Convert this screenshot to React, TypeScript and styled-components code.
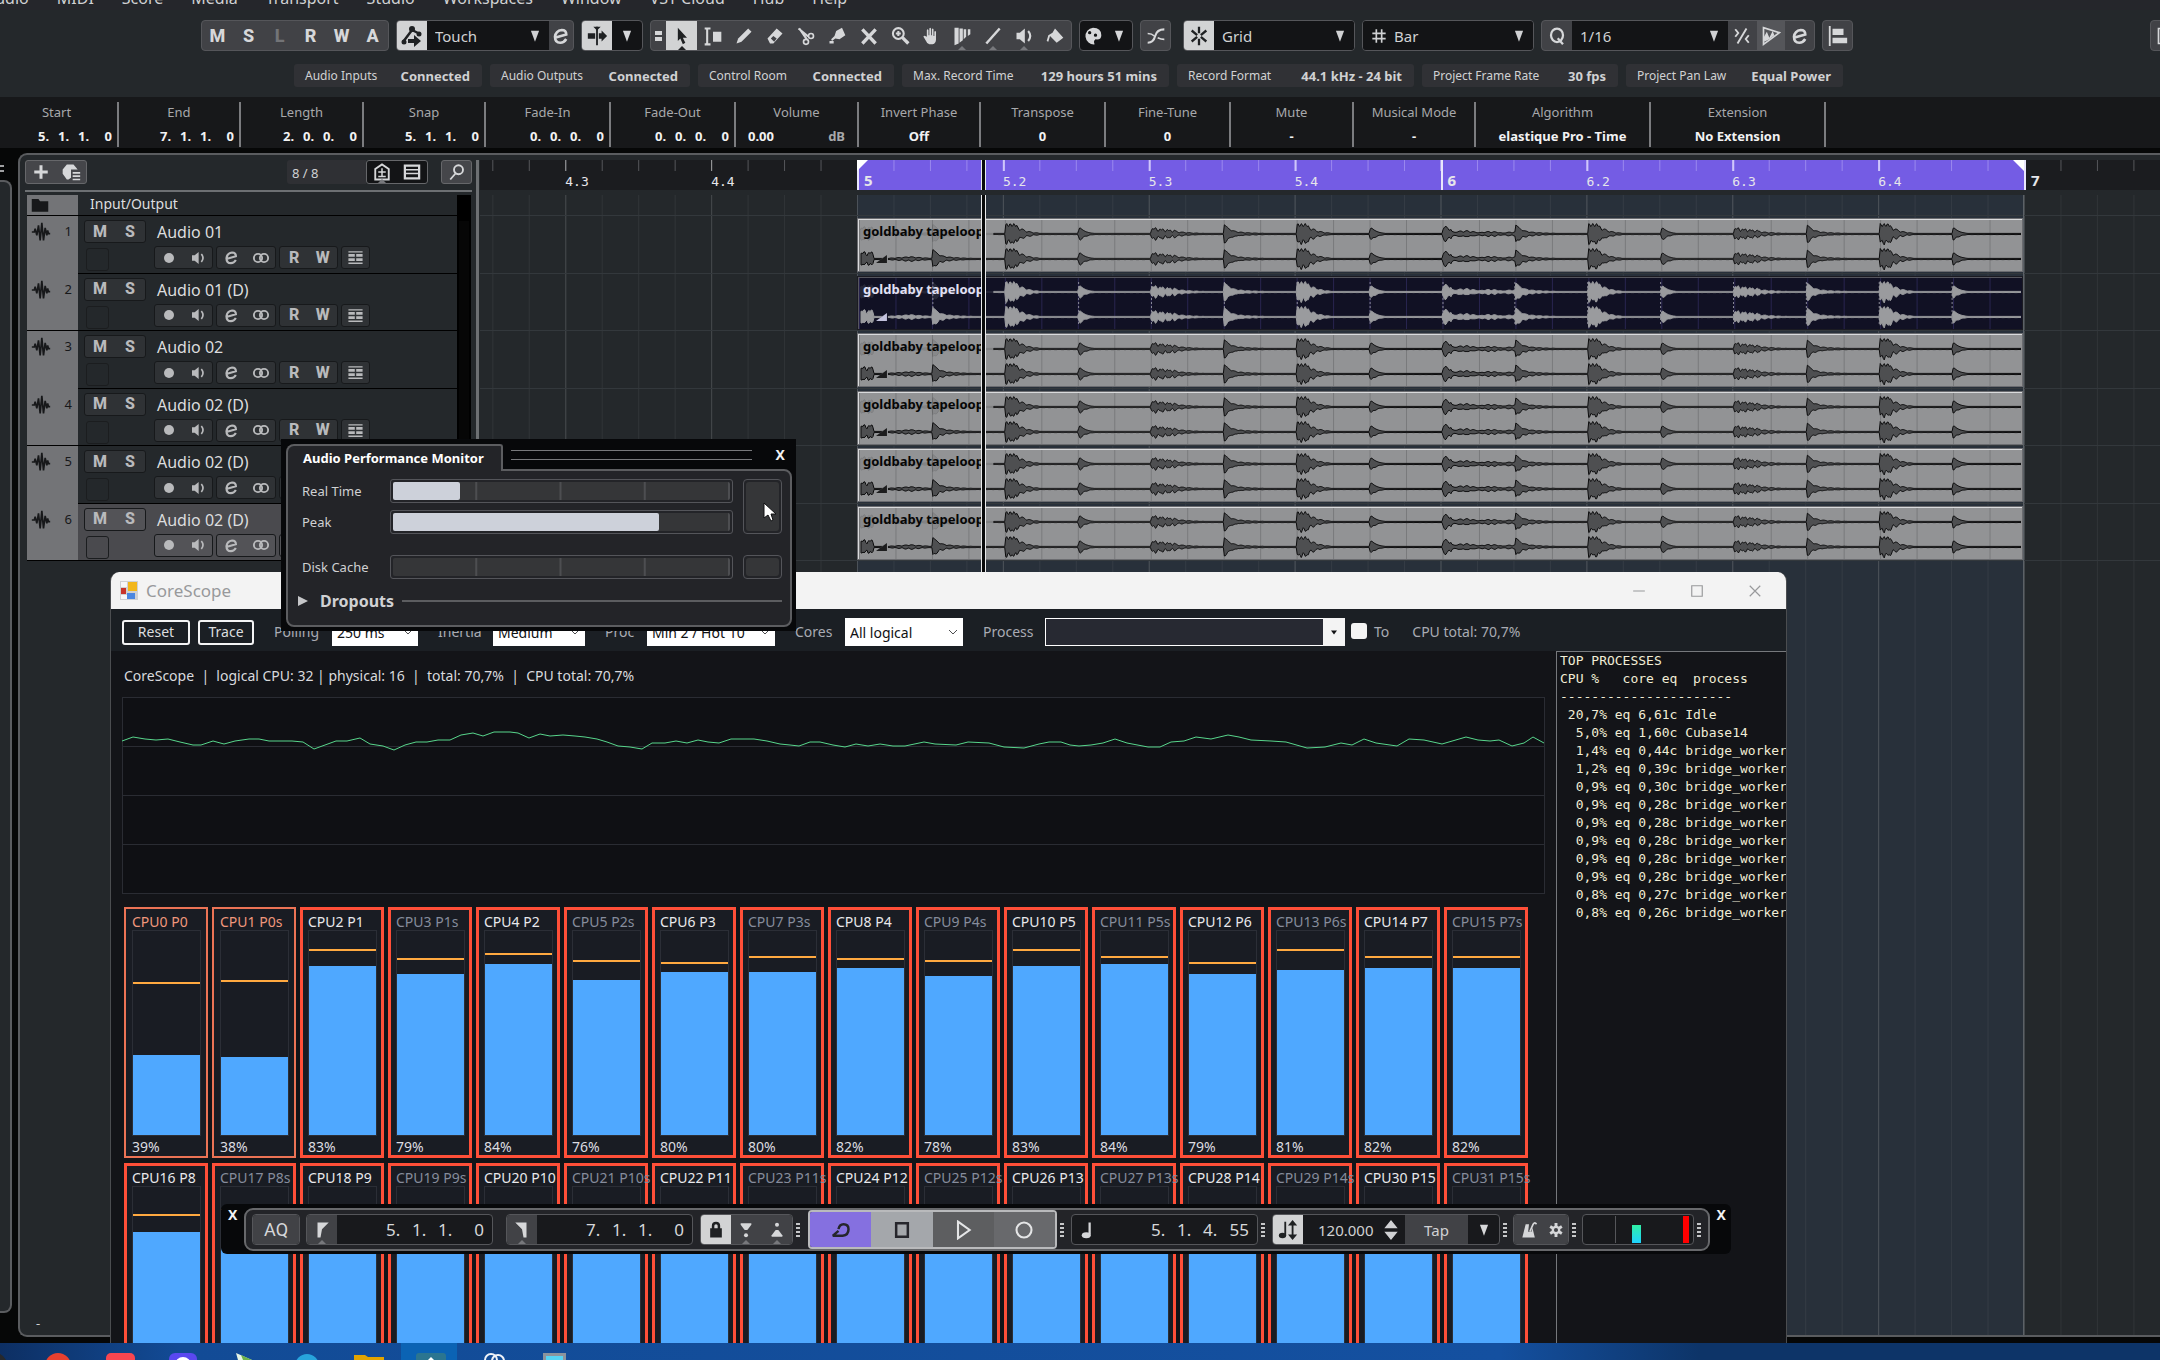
import React from "react";
import styled, { createGlobalStyle, css } from "styled-components";

const GlobalStyle = createGlobalStyle`
  * { box-sizing: border-box; }
  body {
    margin: 0;
    overflow: hidden;
    background: #060707;
    color: #d0d1d3;
    font-family: "Noto Sans", "Open Sans", sans-serif;
    font-size: 13px;
    line-height: 18px;
  }
  button, select, input {
    margin: 0;
    padding: 0;
    border: 0;
    background: none;
    color: inherit;
    font: inherit;
  }
`;

/* ---------- icons ---------- */

const line = { fill: "none", stroke: "currentColor", strokeWidth: 2 };

const icons: Record<string, React.ReactNode> = {
  automation: (
    <g>
      <path d="M3 18L12 6l6 3" {...line} strokeWidth={2.5} />
      <circle cx="12" cy="5" r="3" />
      <circle cx="4" cy="18" r="2.5" />
      <circle cx="19" cy="10" r="2.5" />
      <path d="M8 15h6v-4l7 6-7 6v-4H8z" />
    </g>
  ),
  autoscroll: (
    <g>
      <path d="M12 2v20" {...line} />
      <path d="M8 2h8l-4 4zM2 9h8v6H2zM14 9h3V6l6 6-6 6v-3h-3z" />
    </g>
  ),
  pointer: <path d="M7 2l11 12h-5l3 6-3 2-3-7-3 3z" />,
  range: (
    <g>
      <path d="M2 3h7M2 22h7M5 3v19" {...line} strokeWidth={2.5} />
      <path d="M12 7h10v12H12z" />
    </g>
  ),
  pencil: <path d="M3 21l2-6L17 3l4 4L9 19z" />,
  eraser: <path d="M3 15L14 3l7 6-11 12H6zm4 0l4 4 3-4-4-3z" fillRule="evenodd" />,
  scissors: (
    <g {...line}>
      <path d="M3 3l11 9M4 3l9 13M13 12h2" strokeWidth={2.5} />
      <circle cx="18" cy="12" r="3" />
      <circle cx="12" cy="19" r="3" />
    </g>
  ),
  glue: (
    <g>
      <path d="M11 6l7-4 4 9-7 5-5-1-4 3-1-2 4-4z" />
      <path d="M3 18h5v3H3z" />
    </g>
  ),
  cross: <path d="M4 4l16 17M20 4L4 21" {...line} strokeWidth={4} />,
  zoom: (
    <g {...line} strokeWidth={2.5}>
      <circle cx="10" cy="9" r="6.5" />
      <path d="M10 6v6M7 9h6" />
      <path d="M15 14l7 7" strokeWidth={4} />
    </g>
  ),
  hand: (
    <path d="M7 13V5q1-2 2 0v6h1V3q1-2 2 0v8h1V4q1-2 2 0v8h1V7q1-2 2 0v9q0 5-4 6h-4q-3-1-4-4l-3-5q0-2 2-1z" />
  ),
  warp: <path d="M3 2h5v19l-5 2zM9 3h4v14l-4 3zM14 4h3v9l-3 3zM19 4h3v6l-3 2z" />,
  stroke: <path d="M4 21L20 3" {...line} strokeWidth={3} />,
  speaker: (
    <g>
      <path d="M3 8h4l6-5v18l-6-5H3z" />
      <path d="M17 6q5 6 0 12" {...line} strokeWidth={2.5} />
    </g>
  ),
  bucket: <path d="M9 8l3-5 10 11-8 6-8-8-2 7-2-1 2-7z" />,
  palette: (
    <path
      d="M12 2a10 10 0 1 0 2 20q-2-4 1-6 7 1 7-5 0-9-10-9zm-4 4a2 2 0 1 1 0 4 2 2 0 0 1 0-4zm7 3a2 2 0 1 1 0 4 2 2 0 0 1 0-4z"
      fillRule="evenodd"
    />
  ),
  crossfade: (
    <g {...line}>
      <path d="M2 20q7 0 9-8t11-8" strokeWidth={2.5} />
      <path d="M2 9q5 0 8 3M14 14q4 2 8 2" />
    </g>
  ),
  snap: (
    <g {...line} strokeWidth={2.5}>
      <path d="M12 2v7M12 15v7M4 6l6 5M20 6l-6 5M4 18l6-5M20 18l-6-5" />
    </g>
  ),
  hash: <path d="M8 2v20M16 2v20M2 8h20M2 16h20" {...line} strokeWidth={2.5} />,
  quantize: (
    <g {...line} strokeWidth={3}>
      <ellipse cx="12" cy="11" rx="8" ry="9" />
      <path d="M13 15l7 8" />
    </g>
  ),
  swing: <path d="M6 22L18 2M3 3l4 5-4 5M21 11l-4 5 4 5" {...line} strokeWidth={2.5} />,
  audiowarp: (
    <g>
      <path d="M3 2v20L22 8z" {...line} />
      <path d="M3 14l4-7 3 7 4-8 2 5-6 5-6 3z" />
    </g>
  ),
  edit: <path d="M5 14l14-4q0-6-6-6-8 1-9 9 0 8 7 8 5 0 8-5" {...line} strokeWidth={3.5} />,
  align: <path d="M2 1h2v22H2zM6 4h12v7H6zM6 14h16v6H6z" />,
  plus: <path d="M10 3h4v7h7v4h-7v7h-4v-7H3v-4h7z" />,
  preset: <path d="M7 3h8l5 6H12v10l-3 2H7l-5-7V9zM14 12h9v2h-9zM14 16h9v2h-9zM14 20h9v2h-9z" />,
  agents: (
    <g>
      <path d="M3 22V8l9-6 9 6v14z" {...line} strokeWidth={2.5} />
      <path d="M11 7h2v4h4v2h-4v4h4v2H7v-2h4v-4H7v-2h4z" />
    </g>
  ),
  divide: <path d="M1 2h22v20H1zm3 3v3h16V5zm0 5v3h16v-3zm0 5v4h16v-4z" fillRule="evenodd" />,
  search: (
    <g {...line} strokeWidth={2.5}>
      <circle cx="14" cy="9" r="6" />
      <path d="M10 14l-7 8" />
    </g>
  ),
  wave: <path d="M1 12h3l1-4 2 8 2-12 2 18 2-21 2 21 2-15 2 9 1-6 1 4h2" {...line} />,
  record: <circle cx="12" cy="12" r="6" />,
  link: (
    <g {...line} strokeWidth={2.5}>
      <circle cx="8" cy="12" r="5.5" />
      <circle cx="16" cy="12" r="5.5" />
    </g>
  ),
  lanes: (
    <path d="M2 3h20v2H2zM2 7h9v4H2zM13 7h9v4h-9zM2 13h9v4H2zM13 13h9v4h-9zM2 19h20v2H2z" />
  ),
  folder: <path d="M1 4h9l2 3h11v14H1z" />,
  lock: (
    <path d="M7 10V7q0-5 5-5t5 5v3h2v11H5V10zm3 0h4V7q0-2-2-2t-2 2z" fillRule="evenodd" />
  ),
  punchIn: (
    <g>
      <path d="M4 2h16v2l-6 8h-4L4 4z" />
      <circle cx="12" cy="20" r="3" />
    </g>
  ),
  punchOut: (
    <g>
      <path d="M4 22h16v-2l-6-8h-4l-6 8z" />
      <circle cx="12" cy="4" r="3" />
    </g>
  ),
  flagLeft: <path d="M6 2h15l-9 9-2 11H6z" />,
  flagRight: <path d="M18 2H3l9 9 2 11h4z" />,
  cycle: <path d="M2 19h12q7-1 7-8 0-6-6-6-5 0-6 6M2 19l7-6" {...line} strokeWidth={3} />,
  stop: <path d="M5 4h14v16H5z" {...line} strokeWidth={3} />,
  play: <path d="M6 2l14 10L6 22z" {...line} strokeWidth={2.5} />,
  recordRing: <circle cx="12" cy="12" r="9" {...line} strokeWidth={2.5} />,
  note: (
    <g>
      <path d="M14 2h3v16h-3z" />
      <ellipse cx="11" cy="19" rx="6" ry="4" />
    </g>
  ),
  tempo: (
    <g>
      <path d="M8 3h2v15H8z" />
      <ellipse cx="6" cy="18" rx="4" ry="3" />
      <path d="M17 1l5 6h-4v10h4l-5 6-5-6h4V7h-4z" />
    </g>
  ),
  stepper: <path d="M12 0l8 10H4zM12 24l8-10H4z" />,
  metronome: (
    <g>
      <path d="M8 5h4l-1 9h4l1-5 3 12H4z" />
      <path d="M13 14l4-9q2-3 4 0" {...line} />
    </g>
  ),
  gear: (
    <g>
      <circle cx="12" cy="12" r="5.5" {...line} strokeWidth={4} />
      <path d="M12 0v6M12 18v6M2 6l5 3M17 15l5 3M22 6l-5 3M7 15l-5 3" {...line} strokeWidth={5} />
    </g>
  ),
  caret: <path d="M5 3h14l-7 19z" />,
  chevron: <path d="M4 8l8 8 8-8" {...line} />,
  smallCaret: <path d="M6 9h12l-6 8z" />,
  minimize: <path d="M2 12h20" {...line} />,
  maximize: <path d="M3 3h18v18H3z" {...line} />,
  close: <path d="M3 3l18 18M21 3L3 21" {...line} />,
};

const Svg = styled.svg`
  display: block;
  flex: none;
  fill: currentColor;
`;

const Icon = ({ name, size = 22 }: { name: string; size?: number }) => (
  <Svg width={size} height={size} viewBox="0 0 24 24" aria-hidden="true">
    {icons[name]}
  </Svg>
);

/* ---------- page ---------- */

const Page = styled.div`
  position: relative;
  display: flex;
  flex-direction: column;
  height: 100vh;
  overflow: hidden;
`;

const MenuBar = styled.nav`
  display: flex;
  align-items: flex-end;
  gap: 28px;
  flex: none;
  height: 10px;
  margin-left: -15px;
  padding-bottom: 2px;
  overflow: hidden;
  background: #25262b;
  font-size: 16px;
  line-height: 20px;
`;

const MenuItem = styled.button`
  flex: none;
`;

const ToolBar = styled.div`
  display: flex;
  gap: 7px;
  flex: none;
  padding: 10px 0 13px 201px;
  background: #24282b;
`;

const Group = styled.div<{ $width: number; $dark?: boolean; $last?: boolean }>`
  display: flex;
  flex: none;
  width: ${(p) => p.$width}px;
  height: 31px;
  overflow: hidden;
  border: 1px solid #55565a;
  border-radius: 4px;
  background: ${(p) => (p.$dark ? "#131416" : "#414246")};
  ${(p) => p.$last && "margin-left: auto; margin-right: -21px;"}
`;

const ToolButton = styled.button<{ $on?: boolean; $dim?: boolean; $notch?: boolean; $shade?: string }>`
  position: relative;
  display: flex;
  flex: 1;
  align-items: center;
  justify-content: center;
  min-width: 0;
  background: ${(p) => (p.$on ? "#d2d3d4" : p.$shade || "transparent")};
  color: ${(p) => (p.$on ? "#1f2123" : p.$dim ? "#737477" : "#d6d7d9")};
  font-family: Roboto, sans-serif;
  font-size: 18px;
  font-weight: 800;
  ${(p) =>
    p.$notch &&
    css`
      &::after {
        content: "";
        position: absolute;
        bottom: 0;
        border: 4px solid transparent;
        border-top: 0;
        border-bottom-color: ${p.$on ? "#1f2123" : "#77787c"};
      }
    `}
`;

const Fixed = styled.div<{ $width: number }>`
  display: flex;
  flex: none;
  width: ${(p) => p.$width}px;
`;

const Pick = styled.label<{ $pad?: number }>`
  display: grid;
  flex: 1;
  align-items: center;
  background: #131416;
  font-size: 15px;
  & > * { grid-area: 1 / 1; }
  & > svg { justify-self: end; margin-right: 7px; }
  & > svg.lead { justify-self: start; margin-left: 8px; }
  & > select {
    appearance: none;
    width: 100%;
    height: 100%;
    padding-left: ${(p) => p.$pad ?? 8}px;
  }
`;

const ToolPick = ({ label, value, pad, lead }: { label: string; value: string; pad?: number; lead?: string }) => (
  <Pick $pad={pad}>
    {lead && (
      <Svg className="lead" width={16} height={16} viewBox="0 0 24 24">{icons[lead]}</Svg>
    )}
    <select aria-label={label} defaultValue={value}>
      <option>{value}</option>
    </select>
    <Icon name="caret" size={14} />
  </Pick>
);

const Grip = styled.div`
  display: grid;
  align-content: center;
  justify-content: center;
  gap: 2px;
  flex: none;
  width: 15px;
  & > i { width: 7px; height: 4px; background: #d6d7d9; }
`;

const StatusLine = styled.div`
  display: flex;
  gap: 8px;
  flex: none;
  padding: 0 0 10px 294px;
  background: #24282b;
`;

const Chip = styled.div<{ $width: number }>`
  display: flex;
  justify-content: space-between;
  align-items: center;
  flex: none;
  width: ${(p) => p.$width}px;
  height: 23px;
  padding: 0 12px 0 11px;
  border-radius: 3px;
  background: #303135;
  white-space: nowrap;
  font-size: 12px;
  & > b { font-size: 13px; }
`;

const InfoLine = styled.div`
  display: flex;
  flex: none;
  height: 51px;
  margin-left: -4px;
  padding: 5px 0 1px;
  background: #17181a;
`;

const InfoCell = styled.div<{ $width: number }>`
  flex: none;
  width: ${(p) => p.$width}px;
  padding-top: 1px;
  border-right: 2px solid #7b7c7f;
  text-align: center;
  color: #a7a8ab;
`;

const InfoValue = styled.div<{ $split?: boolean }>`
  display: flex;
  justify-content: ${(p) => (p.$split ? "space-between" : "center")};
  padding: 6px 12px 0;
  color: #f2f2f3;
  font-weight: 700;
`;

const Unit = styled.span`
  color: #a7a8ab;
`;

const BarsBeats = styled.div<{ $large?: boolean }>`
  display: grid;
  grid-template-columns: ${(p) => (p.$large ? "repeat(3, 26px) 20px" : "repeat(3, 20px) 14px")};
  justify-content: end;
  flex: 1;
  padding-right: ${(p) => (p.$large ? 8 : 5)}px;
  padding-top: ${(p) => (p.$large ? 0 : 6)}px;
  color: ${(p) => (p.$large ? "#d6d7d9" : "#f2f2f3")};
  font-size: ${(p) => (p.$large ? 17 : 13)}px;
  font-weight: ${(p) => (p.$large ? 400 : 700)};
  text-align: left;
  & > :last-child { text-align: right; }
`;

const Position = ({ parts, large }: { parts: string[]; large?: boolean }) => (
  <BarsBeats $large={large}>
    {parts.map((part, i) => (
      <span key={i}>{part}</span>
    ))}
  </BarsBeats>
);

/* ---------- project window ---------- */

const Main = styled.main`
  display: flex;
  flex: 1;
  min-height: 0;
  gap: 6px;
  background: #060707;
`;

const RackEdge = styled.div`
  display: flex;
  flex-direction: column;
  flex: none;
  width: 12px;
  padding: 17px 0 30px;
`;

const RackHandle = styled.div`
  flex: none;
  width: 4px;
  height: 7px;
  border: solid #a0a1a3;
  border-width: 2px 0;
`;

const RackBody = styled.div`
  flex: 1;
  margin-top: 8px;
  border: 2px solid #5a5c5f;
  border-left: 0;
  border-radius: 0 8px 8px 0;
  background: #24282b;
`;

const Project = styled.section`
  display: flex;
  flex: 1;
  min-width: 0;
  margin: 5px 0 6px;
  border: 2px solid #5a5c5f;
  border-right: 0;
  border-radius: 9px 0 0 9px;
  background: #24282b;
  overflow: hidden;
`;

const TrackPane = styled.div`
  display: flex;
  flex-direction: column;
  flex: none;
  width: 456px;
  padding: 5px 4px 0 5px;
`;

const TrackHead = styled.div`
  display: flex;
  flex: none;
  height: 24px;
`;

const SmallGroup = styled.div<{ $width: number; $dark?: boolean }>`
  display: flex;
  flex: none;
  width: ${(p) => p.$width}px;
  border: 1px solid #66676a;
  border-radius: 3px;
  background: ${(p) => (p.$dark ? "#131416" : "#45464a")};
`;

const Count = styled.div`
  flex: none;
  width: 79px;
  margin-left: auto;
  padding: 4px 0 0 5px;
  border-radius: 3px 0 0 3px;
  background: #2f3034;
`;

const Rule = styled.div`
  flex: none;
  height: 2px;
  margin: 6px 0 3px;
  background: #6d7073;
`;

const TrackList = styled.div`
  display: flex;
  flex: none;
  height: 366px;
  margin: 0 1px 0 2px;
`;

const rows = css`
  display: grid;
  grid-template-rows: 21px repeat(6, 1fr);
`;

const TrackRows = styled.div`
  ${rows}
  flex: 1;
`;

const MeterStrip = styled.div`
  flex: none;
  width: 14px;
  border: solid #000;
  border-width: 26px 2px 0;
  background: #060606;
`;

const TrackRow = styled.div`
  display: flex;
  min-height: 0;
`;

const TrackTag = styled.div<{ $rule?: boolean; $folder?: boolean }>`
  display: flex;
  justify-content: space-between;
  flex: none;
  width: 51px;
  padding: ${(p) => (p.$folder ? "1px 4px" : "6px 6px 0 4px")};
  border-bottom: ${(p) => (p.$rule ? "1px solid #000" : "0")};
  background: #737477;
  color: #17181a;
`;

const TrackBody = styled.div<{ $selected?: boolean; $folder?: boolean }>`
  display: flex;
  flex-direction: column;
  gap: 3px;
  flex: 1;
  padding: ${(p) => (p.$folder ? "0 12px" : "4px 6px 3px")};
  border-bottom: 1px solid #000;
  background: ${(p) => (p.$selected ? "#4a4a4e" : "transparent")};
  color: #dcdddf;
  font-size: ${(p) => (p.$folder ? 14 : 16)}px;
`;

const TrackLine = styled.div`
  display: flex;
  gap: 3px;
  height: 23px;
`;

const TrackButtons = styled.div<{ $width: number }>`
  display: flex;
  flex: none;
  width: ${(p) => p.$width}px;
  border: 1px solid #17191b;
  border-radius: 3px;
  background: rgba(255, 255, 255, 0.05);
`;

const TrackButton = styled.button`
  display: flex;
  flex: 1;
  align-items: center;
  justify-content: center;
  color: #b9babc;
  font-family: Roboto, sans-serif;
  font-size: 16px;
  font-weight: 800;
`;

const TrackName = styled.span`
  margin-left: 8px;
  line-height: 24px;
`;

const ColorSlot = styled.div`
  flex: none;
  width: 23px;
  height: 23px;
  margin: 2px 42px 0 2px;
  border: 1px solid #1b1d1f;
  border-radius: 3px;
`;

const Footnote = styled.div`
  margin: auto 0 3px 11px;
`;

const Splitter = styled.div`
  flex: none;
  width: 3px;
  margin: 5px 1px 0 0;
  background: #6d7073;
`;

const Timeline = styled.div`
  position: relative;
  display: grid;
  grid-template-columns: 377px 1167px 1fr;
  grid-template-rows: 30px 5px 1fr;
  flex: 1;
  min-width: 0;
  padding-top: 5px;
`;

// The cycle range is two bars, so a beat is an eighth of it.
const BEAT = "calc(1167px / 8)";
const SIXTEENTH = "calc(1167px / 32)";

const Ruler = styled.div<{ $cycle?: boolean; $before?: boolean }>`
  display: flex;
  justify-content: ${(p) => (p.$before ? "flex-end" : "flex-start")};
  overflow: hidden;
  background-color: ${(p) => (p.$cycle ? "#745ce4" : "#1b1c1f")};
  background-image: ${(p) =>
    p.$cycle
      ? "linear-gradient(90deg, #cfc6fb 2px, transparent 2px), linear-gradient(90deg, #9a88ee 1px, transparent 1px)"
      : "linear-gradient(90deg, #9a9b9d 1px, transparent 1px), linear-gradient(90deg, #55565a 1px, transparent 1px)"};
  background-size: ${BEAT} 11px, ${SIXTEENTH} 11px;
  background-position: ${(p) => (p.$before ? "right top" : "left top")};
  background-repeat: repeat-x;
`;

const Beat = styled.div<{ $bar?: boolean }>`
  flex: none;
  width: ${BEAT};
  padding: ${(p) => (p.$bar ? "11px 0 0 5px" : "13px 0 0")};
  border-left: ${(p) => (p.$bar ? "2px solid #e9e6fb" : "0")};
  color: #e6e6ea;
  font-family: ${(p) => (p.$bar ? "inherit" : '"DejaVu Sans Mono", monospace')};
  font-size: ${(p) => (p.$bar ? 15 : 13)}px;
  font-weight: ${(p) => (p.$bar ? 700 : 400)};
`;

const Flag = styled.i<{ $end?: boolean }>`
  position: absolute;
  top: 5px;
  left: ${(p) => (p.$end ? 1533 : 377)}px;
  width: 11px;
  height: 11px;
  background: #fff;
  clip-path: ${(p) => (p.$end ? "polygon(0 0, 100% 0, 100% 100%)" : "polygon(0 0, 100% 0, 0 100%)")};
`;

const Lanes = styled.div<{ $cycle?: boolean; $before?: boolean }>`
  ${rows}
  grid-row: 3;
  grid-template-rows: 21px repeat(6, calc(345px / 6)) 1fr;
  border-right: ${(p) => (p.$cycle ? "1px solid #5b6167" : "0")};
  background-color: ${(p) => (p.$cycle ? "#28303a" : "#24282b")};
  background-image: ${(p) =>
    p.$cycle
      ? "linear-gradient(90deg, #4b5158 1px, transparent 1px), linear-gradient(90deg, #343b44 1px, transparent 1px)"
      : "linear-gradient(90deg, #44484b 1px, transparent 1px), linear-gradient(90deg, #303437 1px, transparent 1px)"};
  background-size: ${BEAT} 100%, ${SIXTEENTH} 100%;
  background-position: ${(p) => (p.$before ? "right top" : "left top")};
  background-repeat: repeat-x;
`;

const Lane = styled.div`
  min-height: 0;
  padding: 2px 0 1px;
  border-bottom: 1px solid #33383c;
`;

const Clip = styled.div<{ $dark?: boolean }>`
  position: relative;
  height: 54px;
  padding: 1px;
  border: 2px solid ${(p) => (p.$dark ? "#56565e" : "#d9dadc")};
  border-bottom-width: 1px;
  border-right-width: 1px;
  outline: 1px solid ${(p) => (p.$dark ? "#1b1b22" : "#6b6c70")};
  outline-offset: -1px;
  background-color: ${(p) => (p.$dark ? "#111124" : "#929395")};
  background-image: linear-gradient(90deg, ${(p) => (p.$dark ? "#28244f" : "#78797b")} 1px, transparent 1px);
  background-size: ${SIXTEENTH} 100%;
`;

const ClipName = styled.span<{ $dark?: boolean }>`
  position: absolute;
  top: 2px;
  left: 4px;
  width: 120px;
  overflow: hidden;
  color: ${(p) => (p.$dark ? "#e2e1f4" : "#060606")};
  font-weight: 700;
  white-space: nowrap;
`;

const Playhead = styled.i<{ $ruler?: boolean }>`
  position: absolute;
  top: ${(p) => (p.$ruler ? 5 : 40)}px;
  bottom: ${(p) => (p.$ruler ? "auto" : 0)};
  left: 501px;
  width: 5px;
  height: ${(p) => (p.$ruler ? "30px" : "auto")};
  border: solid #e9eaeb;
  border-width: 0 1px;
  background: #08090a;
`;

/* ---------- waveform ---------- */

type Kind = "kick" | "blip" | "rattle" | "snap" | "shaker" | "tail";

const hits: [number, Kind][] = [
  [0, "tail"], [2, "snap"], [4, "kick"], [6, "blip"], [8, "rattle"], [10, "snap"],
  [12, "kick"], [14, "blip"], [16, "shaker"], [18, "snap"], [20, "kick"], [22, "blip"],
  [24, "rattle"], [26, "snap"], [28, "kick"], [30, "blip"],
];

const level = (kind: Kind, t: number) => {
  const ripple = 0.5 + 0.5 * Math.abs(Math.sin(t * 0.45));
  const fine = 0.85 + 0.15 * Math.sin(t * 1.7);
  switch (kind) {
    case "kick":
      return t < 11 ? 10.5 * fine : 11 * Math.exp(-(t - 9) / 10) * ripple;
    case "blip":
      return 6 * Math.min(1, (t + 1) / 2) * Math.exp(-Math.max(0, t - 2) / 6);
    case "rattle":
      return t < 26 ? 7.5 * Math.exp(-t / 40) * ripple * fine : 2.5 * Math.exp(-(t - 26) / 20) * ripple;
    case "snap":
      return 8 * Math.exp(-t / 5) + 3 * Math.exp(-t / 28) * ripple;
    case "shaker":
      return (t < 9 ? 8 : 2 + 3.5 * Math.exp(-t / 26)) * (0.4 + 0.6 * Math.abs(Math.sin(t * 0.45) * Math.cos(t * 0.13)));
    default:
      return t < 14 ? 8 * ripple * fine : 2.5 * Math.exp(-Math.abs(t - 50) / 20) * ripple;
  }
};

const channel = (mid: number, from: number, to: number) => {
  const upper: string[] = [];
  const lower: string[] = [];
  for (let x = from; x <= to; x += 1) {
    const pos = x / 36.47;
    const hit = [...hits].reverse().find(([at]) => at <= pos) || hits[0];
    const amp = Math.max(0.6, level(hit[1], x - hit[0] * 36.47));
    upper.push(`${x} ${(mid - amp).toFixed(1)}`);
    lower.unshift(`${x} ${(mid + amp * (0.9 + 0.15 * Math.sin(x))).toFixed(1)}`);
  }
  return `M${upper.join("L")}L${lower.join("L")}Z`;
};

const ghost = channel(13, 0, 134);
const top = channel(13, 134, 1163);
const bottom = channel(38, 1, 1163);

const Waveform = ({ dark }: { dark?: boolean }) => (
  <Svg width="100%" height="50" viewBox="0 0 1163 50" preserveAspectRatio="none" aria-hidden="true">
    <g fill={dark ? "#9a9b9e" : "#4e4f51"} stroke={dark ? "#9a9b9e" : "#0c0c0d"}>
      {dark &&
        hits.slice(1).map(([at]) => (
          <path key={at} d={`M${(at * 36.47).toFixed(0)} 3v44`} stroke="#8a8a98" strokeDasharray="2 2" />
        ))}
      <path d={ghost} opacity="0.15" />
      <path d={top} />
      <path d={bottom} />
    </g>
    <path d="M14 45L28 32v13z" fill={dark ? "#111124" : "#929395"} />
    <path d="M16 42L27 34v8z" fill={dark ? "#c3c2dd" : "#1c1c1d"} />
  </Svg>
);

/* ---------- performance monitor ---------- */

const Monitor = styled.section`
  position: absolute;
  top: 439px;
  left: 281px;
  width: 515px;
  padding: 5px 4px 4px 5px;
  background: #07080a;
`;

const MonitorHead = styled.header`
  display: flex;
`;

const MonitorTab = styled.h2`
  position: relative;
  width: 217px;
  height: 27px;
  margin: 0 0 -2px;
  padding: 2px 0 0 15px;
  border: 2px solid #5c5d60;
  border-bottom: 0;
  border-radius: 8px 3px 0 0;
  background: #232428;
  color: #fff;
  font-size: 13px;
  line-height: 20px;
  white-space: nowrap;
`;

const DragLines = styled.div`
  flex: 1;
  height: 10px;
  margin: 6px 24px 0 8px;
  border: solid #77787b;
  border-width: 1px 0;
`;

const CloseX = styled.button<{ $inset?: boolean }>`
  height: 22px;
  margin-right: ${(p) => (p.$inset ? 7 : 0)}px;
  color: #f2f2f3;
  font-size: 14px;
  font-weight: 700;
`;

const MonitorBody = styled.div`
  padding: 8px 8px 13px 10px;
  border: 2px solid #5c5d60;
  border-radius: 0 8px 8px 8px;
  background: #232428;
`;

const MeterGrid = styled.div`
  display: grid;
  grid-template-columns: 88px 343px 39px;
  grid-template-rows: 24px 24px 24px;
  row-gap: 7px;
  align-items: center;
  padding-left: 4px;
  & > :nth-child(n + 6) { margin-top: 14px; margin-bottom: -14px; }
`;

const Meter = styled.div`
  height: 24px;
  padding: 2px;
  border: 1px solid #54555a;
  border-radius: 3px;
`;

const MeterTrack = styled.div`
  height: 18px;
  border-radius: 2px;
  background: linear-gradient(90deg, transparent calc(100% - 2px), #4d4e51 calc(100% - 2px)) 0 0 / 25% 100%, #353638;
`;

const MeterFill = styled.div`
  height: 100%;
  border-radius: 2px;
  background: #cdd1da;
`;

const Lamp = styled.div<{ $tall?: boolean }>`
  grid-row: ${(p) => (p.$tall ? "1 / 3" : "auto")};
  grid-column: 3;
  align-self: stretch;
  margin-left: 10px;
  padding: 2px;
  border: 1px solid #54555a;
  border-radius: 4px;
  width: 39px;
  & > i { display: block; height: 100%; border-radius: 3px; background: #353638; }
`;

const Dropouts = styled.button`
  display: flex;
  align-items: center;
  gap: 8px;
  width: 100%;
  margin-top: 25px;
  font-size: 16px;
  font-weight: 700;
  line-height: 22px;
  &::before {
    content: "";
    border: 5px solid transparent;
    border-left: 10px solid #c6c7c9;
    border-right: 0;
    margin-right: 4px;
  }
  &::after {
    content: "";
    flex: 1;
    height: 2px;
    background: #5c5d60;
  }
`;

const Cursor = styled.svg`
  position: absolute;
  top: 502px;
  left: 763px;
`;

/* ---------- CoreScope ---------- */

const Scope = styled.section`
  position: absolute;
  top: 572px;
  bottom: 17px;
  left: 110px;
  display: flex;
  flex-direction: column;
  width: 1677px;
  overflow: hidden;
  border: 1px solid #4b4d50;
  border-width: 0 1px;
  border-radius: 9px 9px 0 0;
  background: #131418;
  font-size: 14px;
`;

const TitleBar = styled.header`
  display: flex;
  align-items: center;
  flex: none;
  height: 37px;
  padding: 0 24px 0 9px;
  background: #f3f3f3;
  color: #98999b;
  font-size: 17px;
`;

const Title = styled.h1`
  flex: 1;
  margin: 0 0 0 8px;
  font: inherit;
`;

const WinButton = styled.button`
  display: flex;
  margin-left: 44px;
`;

const ScopeTools = styled.div`
  display: flex;
  align-items: center;
  gap: 20px;
  flex: none;
  height: 42px;
  padding: 4px 0 0 11px;
  background: #1b1f24;
  color: #a9abb3;
`;

const ButtonPair = styled.div`
  display: flex;
  gap: 8px;
`;

const OutlineButton = styled.button<{ $width: number }>`
  width: ${(p) => p.$width}px;
  height: 25px;
  border: 2px solid #f4f4f5;
  border-radius: 3px;
  color: #dcdddf;
`;

const Field = styled.label<{ $label: number; $width: number }>`
  display: grid;
  grid-template-columns: ${(p) => p.$label}px ${(p) => p.$width}px;
  align-items: center;
  & > select, & > input {
    grid-area: 1 / 2;
    appearance: none;
    width: 100%;
    height: 28px;
    padding: 2px 4px 0;
    border: 1px solid #fff;
    background: #fff;
    color: #101113;
  }
  & > input { background: #272932; }
  & > svg { grid-area: 1 / 2; justify-self: end; margin-right: 4px; color: #4d4e50; }
`;

const Drop = styled.b`
  display: grid;
  grid-area: 1 / 2;
  place-items: center;
  justify-self: end;
  width: 22px;
  height: 28px;
  background: #f3f3f3;
  color: #101113;
`;

const Check = styled.label`
  display: flex;
  gap: 7px;
  margin: 0 3px 0 -14px;
  & > input { appearance: none; width: 16px; height: 16px; border-radius: 3px; background: #f3f3f3; }
`;

const ScopeBody = styled.div`
  display: flex;
  flex: 1;
  min-height: 0;
`;

const Graphs = styled.div`
  flex: 1;
  min-width: 0;
  padding: 15px 11px 0;
`;

const Summary = styled.p`
  margin: 0 0 11px 2px;
  color: #d9dade;
  line-height: 20px;
  white-space: pre;
`;

const History = styled.svg`
  display: block;
  width: 100%;
  height: 197px;
  background: #0f1014;
`;

const CoreGrid = styled.div`
  display: grid;
  grid-template-columns: repeat(16, 84px);
  gap: 5px 4px;
  margin: 13px 0 0 2px;
`;

const Core = styled.div<{ $parked?: boolean }>`
  height: 251px;
  padding: ${(p) => (p.$parked ? "4px 6px" : "3px 5px")};
  border: ${(p) => (p.$parked ? "2px solid #ec7355" : "3px solid #ff4f38")};
  background: #191c23;
  color: #dcdde0;
`;

const CoreName = styled.div<{ $tone: string }>`
  color: ${(p) => p.$tone};
  line-height: 17px;
  white-space: nowrap;
`;

const CoreBar = styled.div`
  position: relative;
  display: flex;
  align-items: flex-end;
  height: 206px;
  width: 69px;
  border: 1px solid #2b2e36;
`;

const CoreFill = styled.div`
  flex: 1;
  background: #4fa8ff;
`;

const CorePeak = styled.i`
  position: absolute;
  left: 0;
  right: 0;
  height: 2px;
  background: #ffa940;
`;

const CoreLoad = styled.div`
  line-height: 22px;
`;

const Processes = styled.aside`
  flex: none;
  width: 230px;
  padding-left: 3px;
  overflow: hidden;
  border: 1px solid #76787c;
  border-width: 1px 0 0 1px;
  color: #f1edd6;
  & table {
    border-collapse: collapse;
    font-family: "DejaVu Sans Mono", monospace;
    font-size: 13px;
    line-height: 18px;
    white-space: pre;
  }
  & caption, & th { font-weight: 400; text-align: left; }
  & th, & td { padding: 0; }
  & th:nth-child(2) { padding-left: 2ch; }
  & th:nth-child(3) { padding-left: 1ch; }
  & td:nth-child(2) { padding: 0 1ch; }
`;

/* ---------- transport ---------- */

const Transport = styled.section`
  position: absolute;
  top: 1204px;
  left: 221px;
  display: flex;
  align-items: flex-start;
  justify-content: space-between;
  width: 1510px;
  height: 50px;
  padding: 0 5px 0 7px;
  border-radius: 6px;
  background: #07080a;
`;

const TransportFrame = styled.div`
  display: flex;
  align-items: center;
  width: 1466px;
  height: 43px;
  margin-top: 4px;
  padding-left: 6px;
  border: 2px solid #67686b;
  border-radius: 9px;
  background: #232428;
`;

const TransportGroup = styled.div<{ $width: number; $gap?: number }>`
  display: flex;
  align-items: center;
  flex: none;
  width: ${(p) => p.$width}px;
  height: 31px;
  margin-right: ${(p) => p.$gap ?? 0}px;
  overflow: hidden;
  border: 1px solid #55565a;
  border-radius: 4px;
  background: #18191c;
  & > div:first-child, & > button { height: 100%; }
`;

const AutoQuantize = styled(ToolButton)`
  font-weight: 400;
`;

const Drive = styled.div`
  display: flex;
  flex: none;
  width: 249px;
  height: 39px;
  overflow: hidden;
  border: 2px solid #b9babc;
  border-radius: 4px;
`;

const DriveButton = styled.button<{ $bg: string; $ink?: string }>`
  display: flex;
  flex: 1;
  align-items: center;
  justify-content: center;
  background: ${(p) => p.$bg};
  color: ${(p) => p.$ink || "#e4e5e6"};
`;

const Dots = styled.div<{ $width?: number }>`
  display: grid;
  gap: 2px;
  flex: none;
  width: ${(p) => p.$width ?? 14}px;
  padding-left: 3px;
  & > i { width: 4px; height: 2px; background: #c6c7c9; }
`;

const Tempo = styled.input`
  width: 78px;
  padding-left: 15px;
  font-size: 15px;
`;

const Tap = styled.button`
  width: 63px;
  margin-left: 4px;
  background: #414246;
  font-size: 15px;
`;

const Level = styled.div`
  display: flex;
  align-items: flex-end;
  width: 100%;
  height: 100%;
  padding: 1px 4px 1px 32px;
`;

const LevelBar = styled.i<{ $kind: "rule" | "in" | "clip" }>`
  flex: none;
  width: ${(p) => ({ rule: 1, in: 9, clip: 6 })[p.$kind]}px;
  height: ${(p) => (p.$kind === "in" ? 18 : 27)}px;
  margin-left: ${(p) => ({ rule: 0, in: 16, clip: 0 })[p.$kind]}px;
  margin-right: ${(p) => (p.$kind === "in" ? "auto" : 0)};
  background: ${(p) =>
    ({ rule: "#55565a", in: "linear-gradient(#2ff0a4, #1fd2ff)", clip: "#f00" })[p.$kind]};
`;

/* ---------- taskbar ---------- */

const TaskBar = styled.footer`
  display: flex;
  flex: none;
  height: 17px;
  overflow: hidden;
  background: linear-gradient(90deg, #0d2f63 0, #124b96 180px, #1450a0 1500px, #0d3468 1700px, #0d3468 100%);
`;

/* ---------- data ---------- */

const menus = ["Audio", "MIDI", "Score", "Media", "Transport", "Studio", "Workspaces", "Window", "VST Cloud", "Hub", "Help"];

const tools: [string, string, boolean?][] = [
  ["pointer", "Select", true], ["range", "Range"], ["pencil", "Draw"], ["eraser", "Erase"],
  ["scissors", "Split"], ["glue", "Glue"], ["cross", "Mute"], ["zoom", "Zoom"], ["hand", "Hand"],
  ["warp", "Warp", true], ["stroke", "Line", true], ["speaker", "Play", true], ["bucket", "Color"],
];

const chips: [string, string, number][] = [
  ["Audio Inputs", "Connected", 188],
  ["Audio Outputs", "Connected", 200],
  ["Control Room", "Connected", 196],
  ["Max. Record Time", "129 hours 51 mins", 267],
  ["Record Format", "44.1 kHz - 24 bit", 237],
  ["Project Frame Rate", "30 fps", 196],
  ["Project Pan Law", "Equal Power", 217],
];

const info: { name: string; width: number; at?: string[]; value?: string; unit?: string }[] = [
  { name: "Start", width: 123, at: ["5.", "1.", "1.", "0"] },
  { name: "End", width: 122, at: ["7.", "1.", "1.", "0"] },
  { name: "Length", width: 123, at: ["2.", "0.", "0.", "0"] },
  { name: "Snap", width: 122, at: ["5.", "1.", "1.", "0"] },
  { name: "Fade-In", width: 125, at: ["0.", "0.", "0.", "0"] },
  { name: "Fade-Out", width: 125, at: ["0.", "0.", "0.", "0"] },
  { name: "Volume", width: 123, value: "0.00", unit: "dB" },
  { name: "Invert Phase", width: 122, value: "Off" },
  { name: "Transpose", width: 125, value: "0" },
  { name: "Fine-Tune", width: 125, value: "0" },
  { name: "Mute", width: 123, value: "-" },
  { name: "Musical Mode", width: 122, value: "-" },
  { name: "Algorithm", width: 175, value: "elastique Pro - Time" },
  { name: "Extension", width: 175, value: "No Extension" },
];

const tracks = ["Audio 01", "Audio 01 (D)", "Audio 02", "Audio 02 (D)", "Audio 02 (D)", "Audio 02 (D)"];

const loads = [39, 38, 83, 79, 84, 76, 80, 80, 82, 78, 83, 84, 79, 81, 82, 82, 78];
const peaks = [74, 75, 90, 86, 88, 85, 84, 87, 86, 85, 90, 87, 84, 90, 87, 87, 86];

const processes = [
  ["20,7%", "6,61c", "Idle"], ["5,0%", "1,60c", "Cubase14"], ["1,4%", "0,44c", "bridge_worker"],
  ["1,2%", "0,39c", "bridge_worker"], ["0,9%", "0,30c", "bridge_worker"], ["0,9%", "0,28c", "bridge_worker"],
  ["0,9%", "0,28c", "bridge_worker"], ["0,9%", "0,28c", "bridge_worker"], ["0,9%", "0,28c", "bridge_worker"],
  ["0,9%", "0,28c", "bridge_worker"], ["0,8%", "0,27c", "bridge_worker"], ["0,8%", "0,26c", "bridge_worker"],
];

const history =
  "0,44 11,40 23,42 34,43 46,42 58,45 71,48 79,48 91,44 102,47 113,44 127,42 137,42 147,44 165,44 170,44 181,45 192,52 203,48 214,44 225,44 238,41 248,47 261,49 272,53 283,48 294,45 305,45 316,43 328,43 339,38 351,36 361,39 372,35 388,35 396,36 407,41 418,37 428,39 441,38 453,39 463,40 475,42 485,45 496,49 508,50 520,52 530,46 543,46 554,44 565,46 576,43 586,45 597,46 609,42 632,42 645,44 658,47 668,48 677,49 688,45 698,45 711,48 723,50 734,47 746,49 758,47 771,49 783,49 802,45 813,47 834,48 846,45 867,46 882,50 902,51 917,47 927,45 939,45 948,48 957,49 969,48 981,46 993,42 1005,46 1026,50 1038,50 1049,45 1062,44 1074,40 1089,42 1106,38 1117,40 1129,43 1149,44 1164,45 1185,51 1203,50 1219,46 1230,48 1242,42 1254,46 1275,49 1287,42 1302,43 1320,47 1344,40 1356,43 1368,44 1377,43 1390,49 1402,46 1411,40 1422,46";

const coreTone = (i: number) => {
  if (i < 2) return "#f0977c";
  return i % 2 ? "#868c9c" : "#e9e9ec";
};

/* ---------- parts ---------- */

const TopBars = () => (
  <>
    <MenuBar>
      {menus.map((name) => (
        <MenuItem key={name}>{name}</MenuItem>
      ))}
    </MenuBar>
    <ToolBar>
      <Group $width={188}>
        {["M", "S", "L", "R", "W", "A"].map((letter) => (
          <ToolButton key={letter} $dim={letter === "L"}>{letter}</ToolButton>
        ))}
      </Group>
      <Group $width={178}>
        <Fixed $width={30}>
          <ToolButton $on aria-label="Automation mode"><Icon name="automation" size={24} /></ToolButton>
        </Fixed>
        <ToolPick label="Automation mode" value="Touch" />
        <Fixed $width={24}>
          <ToolButton aria-label="Automation panel"><Icon name="edit" size={18} /></ToolButton>
        </Fixed>
      </Group>
      <Group $width={62} $dark>
        <ToolButton $on aria-label="Auto-scroll"><Icon name="autoscroll" /></ToolButton>
        <ToolButton aria-label="Auto-scroll settings"><Icon name="caret" size={14} /></ToolButton>
      </Group>
      <Group $width={422}>
        <Grip><i /><i /></Grip>
        {tools.map(([icon, label, notch], i) => (
          <ToolButton key={icon} $on={i === 0} $notch={notch} aria-label={label}>
            <Icon name={icon} size={20} />
          </ToolButton>
        ))}
      </Group>
      <Group $width={54} $dark>
        <ToolButton aria-label="Color"><Icon name="palette" size={20} /></ToolButton>
        <ToolButton aria-label="Color menu"><Icon name="caret" size={14} /></ToolButton>
      </Group>
      <Group $width={31}>
        <ToolButton aria-label="Crossfade"><Icon name="crossfade" size={20} /></ToolButton>
      </Group>
      <Fixed $width={177}>
        <Fixed $width={5} />
        <Group $width={172} $dark>
          <Fixed $width={30}>
            <ToolButton $on aria-label="Snap"><Icon name="snap" /></ToolButton>
          </Fixed>
          <ToolPick label="Snap type" value="Grid" />
        </Group>
      </Fixed>
      <Group $width={172} $dark>
        <ToolPick label="Grid type" value="Bar" lead="hash" pad={31} />
      </Group>
      <Group $width={274}>
        <Fixed $width={30}>
          <ToolButton aria-label="Apply quantize"><Icon name="quantize" size={18} /></ToolButton>
        </Fixed>
        <ToolPick label="Quantize preset" value="1/16" />
        <Fixed $width={86}>
          <ToolButton aria-label="Swing"><Icon name="swing" size={18} /></ToolButton>
          <ToolButton $shade="#55565a" aria-label="AudioWarp quantize"><Icon name="audiowarp" size={20} /></ToolButton>
          <ToolButton aria-label="Quantize panel"><Icon name="edit" size={18} /></ToolButton>
        </Fixed>
      </Group>
      <Group $width={31}>
        <ToolButton aria-label="Align"><Icon name="align" /></ToolButton>
      </Group>
      <Group $width={31} $last>
        <ToolButton aria-label="Window layout"><Icon name="maximize" size={20} /></ToolButton>
      </Group>
    </ToolBar>
    <StatusLine>
      {chips.map(([label, value, width]) => (
        <Chip key={label} $width={width}>
          <span>{label}</span>
          <b>{value}</b>
        </Chip>
      ))}
    </StatusLine>
    <InfoLine>
      {info.map((cell) => (
        <InfoCell key={cell.name} $width={cell.width}>
          {cell.name}
          {cell.at ? (
            <Position parts={cell.at} />
          ) : (
            <InfoValue $split={!!cell.unit}>
              <span>{cell.value}</span>
              {cell.unit && <Unit>{cell.unit}</Unit>}
            </InfoValue>
          )}
        </InfoCell>
      ))}
    </InfoLine>
  </>
);

const Track = ({ name, index }: { name: string; index: number }) => (
  <TrackRow>
    <TrackTag $rule={index % 2 === 1}>
      <Icon name="wave" size={20} />
      {index + 1}
    </TrackTag>
    <TrackBody $selected={index === 5}>
      <TrackLine>
        <TrackButtons $width={62}>
          <TrackButton>M</TrackButton>
          <TrackButton>S</TrackButton>
        </TrackButtons>
        <TrackName>{name}</TrackName>
      </TrackLine>
      <TrackLine>
        <ColorSlot />
        <TrackButtons $width={59}>
          <TrackButton aria-label="Record enable"><Icon name="record" size={20} /></TrackButton>
          <TrackButton aria-label="Monitor"><Icon name="speaker" size={16} /></TrackButton>
        </TrackButtons>
        <TrackButtons $width={60}>
          <TrackButton aria-label="Edit channel"><Icon name="edit" size={15} /></TrackButton>
          <TrackButton aria-label="Bypass inserts"><Icon name="link" size={18} /></TrackButton>
        </TrackButtons>
        <TrackButtons $width={59}>
          <TrackButton>R</TrackButton>
          <TrackButton>W</TrackButton>
        </TrackButtons>
        <TrackButtons $width={29}>
          <TrackButton aria-label="Show lanes"><Icon name="lanes" size={17} /></TrackButton>
        </TrackButtons>
      </TrackLine>
    </TrackBody>
  </TrackRow>
);

const ProjectWindow = () => (
  <Main>
    <RackEdge>
      <RackHandle />
      <RackBody />
    </RackEdge>
    <Project>
      <TrackPane>
        <TrackHead>
          <SmallGroup $width={62}>
            <ToolButton aria-label="Add track"><Icon name="plus" size={18} /></ToolButton>
            <ToolButton aria-label="Track preset"><Icon name="preset" size={20} /></ToolButton>
          </SmallGroup>
          <Count>8 / 8</Count>
          <SmallGroup $width={62} $dark>
            <ToolButton $notch aria-label="Visibility agents"><Icon name="agents" size={18} /></ToolButton>
            <ToolButton aria-label="Divide track list"><Icon name="divide" size={18} /></ToolButton>
          </SmallGroup>
          <Fixed $width={13} />
          <SmallGroup $width={31}>
            <ToolButton aria-label="Find tracks"><Icon name="search" size={18} /></ToolButton>
          </SmallGroup>
        </TrackHead>
        <Rule />
        <TrackList>
          <TrackRows>
            <TrackRow>
              <TrackTag $rule $folder><Icon name="folder" size={18} /></TrackTag>
              <TrackBody $folder>Input/Output</TrackBody>
            </TrackRow>
            {tracks.map((name, i) => (
              <Track key={i} name={name} index={i} />
            ))}
          </TrackRows>
          <MeterStrip />
        </TrackList>
        <Footnote>-</Footnote>
      </TrackPane>
      <Splitter />
      <Timeline>
        <Ruler $before>
          <Beat>4.3</Beat>
          <Beat>4.4</Beat>
        </Ruler>
        <Ruler $cycle>
          {["5", "5.2", "5.3", "5.4", "6", "6.2", "6.3", "6.4"].map((beat) => (
            <Beat key={beat} $bar={beat.length === 1}>{beat}</Beat>
          ))}
        </Ruler>
        <Ruler>
          <Beat $bar>7</Beat>
        </Ruler>
        <Flag />
        <Flag $end />
        <Lanes $before>
          {Array.from({ length: 7 }, (_, i) => <Lane key={i} />)}
        </Lanes>
        <Lanes $cycle>
          <Lane />
          {tracks.map((_, i) => (
            <Lane key={i}>
              <Clip $dark={i === 1}>
                <Waveform dark={i === 1} />
                <ClipName $dark={i === 1}>goldbaby tapeloop</ClipName>
              </Clip>
            </Lane>
          ))}
        </Lanes>
        <Lanes>
          {Array.from({ length: 7 }, (_, i) => <Lane key={i} />)}
        </Lanes>
        <Playhead $ruler />
        <Playhead />
      </Timeline>
    </Project>
  </Main>
);

const ScopePick = ({ label, value, at, width }: { label: string; value: string; at: number; width: number }) => (
  <Field $label={at} $width={width}>
    {label}
    <select defaultValue={value}>
      <option>{value}</option>
    </select>
    <Icon name="chevron" size={12} />
  </Field>
);

const CoreScope = () => (
  <Scope>
    <TitleBar>
      <Svg width="18" height="19" viewBox="0 0 18 19">
        <path d="M0 0h18v19H0z" fill="#cfd0d3" />
        <path d="M1 1h6v5H1zM1 14h6v4H1z" fill="#f7f7f8" />
        <path d="M1 7h5v6H1z" fill="#c8342c" />
        <path d="M8 1h9v9H8z" fill="#f2b71c" />
        <path d="M7 12h8v6H7z" fill="#4a86e0" />
      </Svg>
      <Title>CoreScope</Title>
      <WinButton aria-label="Minimize"><Icon name="minimize" size={14} /></WinButton>
      <WinButton aria-label="Maximize"><Icon name="maximize" size={14} /></WinButton>
      <WinButton aria-label="Close"><Icon name="close" size={14} /></WinButton>
    </TitleBar>
    <ScopeTools>
      <ButtonPair>
        <OutlineButton $width={68}>Reset</OutlineButton>
        <OutlineButton $width={56}>Trace</OutlineButton>
      </ButtonPair>
      <ScopePick label="Polling" value="250 ms" at={58} width={86} />
      <ScopePick label="Inertia" value="Medium" at={55} width={92} />
      <ScopePick label="Proc" value="Min 2 / Hot 10" at={42} width={128} />
      <ScopePick label="Cores" value="All logical" at={50} width={118} />
      <Field $label={62} $width={300}>
        Process
        <input type="text" defaultValue="" />
        <Drop><Icon name="smallCaret" size={12} /></Drop>
      </Field>
      <Check>
        <input type="checkbox" />
        To
      </Check>
      <span>CPU total: 70,7%</span>
    </ScopeTools>
    <ScopeBody>
      <Graphs>
        <Summary>{"CoreScope  |  logical CPU: 32 | physical: 16  |  total: 70,7%  |  CPU total: 70,7%"}</Summary>
        <History viewBox="0 0 1423 197" preserveAspectRatio="none" role="img" aria-label="CPU history">
          <path d="M0 .5h1423M0 49.5h1423M0 98.5h1423M0 147.5h1423M0 196.5h1423M.5 0v197M1422.5 0v197" stroke="#2a2c33" />
          <polyline points={history} fill="none" stroke="#58d68c" />
        </History>
        <CoreGrid>
          {Array.from({ length: 32 }, (_, i) => (
            <Core key={i} $parked={i < 2}>
              <CoreName $tone={coreTone(i)}>
                {`CPU${i} P${Math.floor(i / 2)}${i % 2 ? "s" : ""}`}
              </CoreName>
              <CoreBar>
                <CoreFill style={{ height: `${loads[i] ?? 80}%` }} />
                <CorePeak style={{ bottom: `${peaks[i] ?? 88}%` }} />
              </CoreBar>
              <CoreLoad>{loads[i] ?? 80}%</CoreLoad>
            </Core>
          ))}
        </CoreGrid>
      </Graphs>
      <Processes>
        <table>
          <caption>TOP PROCESSES</caption>
          <thead>
            <tr>
              <th>CPU %</th>
              <th>core eq</th>
              <th>process</th>
            </tr>
            <tr>
              <th colSpan={3}>----------------------</th>
            </tr>
          </thead>
          <tbody>
            {processes.map(([cpu, eq, name], i) => (
              <tr key={i}>
                <td>{cpu.padStart(6)}</td>
                <td>{`eq ${eq}`}</td>
                <td>{name}</td>
              </tr>
            ))}
          </tbody>
        </table>
      </Processes>
    </ScopeBody>
  </Scope>
);

const PerformanceMonitor = () => (
  <Monitor>
    <MonitorHead>
      <MonitorTab>Audio Performance Monitor</MonitorTab>
      <DragLines />
      <CloseX $inset aria-label="Close">X</CloseX>
    </MonitorHead>
    <MonitorBody>
      <MeterGrid>
        <span>Real Time</span>
        <Meter><MeterTrack><MeterFill style={{ width: "20%" }} /></MeterTrack></Meter>
        <Lamp $tall><i /></Lamp>
        <span>Peak</span>
        <Meter><MeterTrack><MeterFill style={{ width: "79%" }} /></MeterTrack></Meter>
        <span>Disk Cache</span>
        <Meter><MeterTrack /></Meter>
        <Lamp><i /></Lamp>
      </MeterGrid>
      <Dropouts>Dropouts</Dropouts>
    </MonitorBody>
  </Monitor>
);

const Separator = ({ width }: { width?: number }) => (
  <Dots $width={width}><i /><i /><i /><i /></Dots>
);

const TransportBar = () => (
  <Transport>
    <CloseX aria-label="Close">X</CloseX>
    <TransportFrame>
      <TransportGroup $width={48} $gap={6}>
        <AutoQuantize $shade="#414246">AQ</AutoQuantize>
      </TransportGroup>
      <TransportGroup $width={187} $gap={13}>
        <Fixed $width={30}><ToolButton $shade="#414246" $notch aria-label="Go to left locator"><Icon name="flagLeft" size={18} /></ToolButton></Fixed>
        <Position large parts={["5.", "1.", "1.", "0"]} />
      </TransportGroup>
      <TransportGroup $width={187} $gap={7}>
        <Fixed $width={30}><ToolButton $shade="#414246" $notch aria-label="Go to right locator"><Icon name="flagRight" size={18} /></ToolButton></Fixed>
        <Position large parts={["7.", "1.", "1.", "0"]} />
      </TransportGroup>
      <TransportGroup $width={93}>
        <ToolButton $on aria-label="Lock punch points"><Icon name="lock" size={20} /></ToolButton>
        <ToolButton $shade="#414246" $notch aria-label="Punch in"><Icon name="punchIn" size={16} /></ToolButton>
        <ToolButton $shade="#414246" $notch aria-label="Punch out"><Icon name="punchOut" size={16} /></ToolButton>
      </TransportGroup>
      <Separator width={15} />
      <Drive>
        <DriveButton $bg="#8570e0" $ink="#26262c" aria-label="Cycle"><Icon name="cycle" size={20} /></DriveButton>
        <DriveButton $bg="#a4a7ab" $ink="#26262c" aria-label="Stop"><Icon name="stop" size={20} /></DriveButton>
        <DriveButton $bg="#5d5e60" aria-label="Play"><Icon name="play" size={20} /></DriveButton>
        <DriveButton $bg="#68696c" aria-label="Record"><Icon name="recordRing" size={20} /></DriveButton>
      </Drive>
      <Separator />
      <TransportGroup $width={187}>
        <Fixed $width={30}><ToolButton aria-label="Time format"><Icon name="note" size={18} /></ToolButton></Fixed>
        <Position large parts={["5.", "1.", "4.", "55"]} />
      </TransportGroup>
      <Separator />
      <TransportGroup $width={228}>
        <Fixed $width={30}><ToolButton $on aria-label="Tempo track"><Icon name="tempo" /></ToolButton></Fixed>
        <Tempo aria-label="Tempo" defaultValue="120.000" />
        <Icon name="stepper" size={20} />
        <Tap>Tap</Tap>
        <ToolButton aria-label="Tempo menu"><Icon name="caret" size={14} /></ToolButton>
      </TransportGroup>
      <Separator width={13} />
      <TransportGroup $width={56}>
        <Fixed $width={30}><ToolButton $shade="#414246" aria-label="Metronome"><Icon name="metronome" size={20} /></ToolButton></Fixed>
        <ToolButton $shade="#414246" aria-label="Metronome setup"><Icon name="gear" size={14} /></ToolButton>
      </TransportGroup>
      <Separator width={13} />
      <TransportGroup $width={112}>
        <Level>
          <LevelBar $kind="rule" />
          <LevelBar $kind="in" />
          <LevelBar $kind="clip" />
        </Level>
      </TransportGroup>
      <Separator width={11} />
    </TransportFrame>
    <CloseX aria-label="Close">X</CloseX>
  </Transport>
);

const Apps = () => (
  <TaskBar>
    <Svg width="600" height="17" viewBox="0 0 600 17" aria-hidden="true">
      <path d="M0 11l3 2 3 4H0z" fill="#26282c" />
      <circle cx="58" cy="23" r="13" fill="#e8402f" />
      <rect x="106" y="10" width="29" height="20" rx="5" fill="#f84650" />
      <rect x="169" y="10" width="28" height="20" rx="6" fill="#5a48f0" />
      <circle cx="183" cy="22" r="8" fill="#fff" />
      <path d="M236 10l16 7h-14z" fill="#e6f4e4" />
      <path d="M241 12l11 5h-9z" fill="#6db24a" />
      <circle cx="307" cy="23" r="12" fill="#27a4dc" />
      <path d="M354 12h11l3 2h16v6h-30z" fill="#e2a400" />
      <path d="M401 0h56v17h-56z" fill="#0b63b4" />
      <rect x="416" y="10" width="30" height="12" rx="3" fill="#2b7590" />
      <path d="M431 14l4 4h-8z" fill="#fff" />
      <g fill="none" stroke="#eef2f8" strokeWidth="2">
        <circle cx="491" cy="17" r="6" />
        <circle cx="498" cy="18" r="6" />
      </g>
      <path d="M543 10h23v10h-23z" fill="#8b949d" />
      <path d="M546 13h17v7h-17z" fill="#56d4f4" />
    </Svg>
  </TaskBar>
);

export default function App() {
  return (
    <Page>
      <GlobalStyle />
      <TopBars />
      <ProjectWindow />
      <Apps />
      <CoreScope />
      <PerformanceMonitor />
      <TransportBar />
      <Cursor width="16" height="20" viewBox="0 0 16 20" aria-hidden="true">
        <path d="M1 1v15l4-3 3 6 2-1-2-6h5z" fill="#fff" stroke="#101113" />
      </Cursor>
    </Page>
  );
}
